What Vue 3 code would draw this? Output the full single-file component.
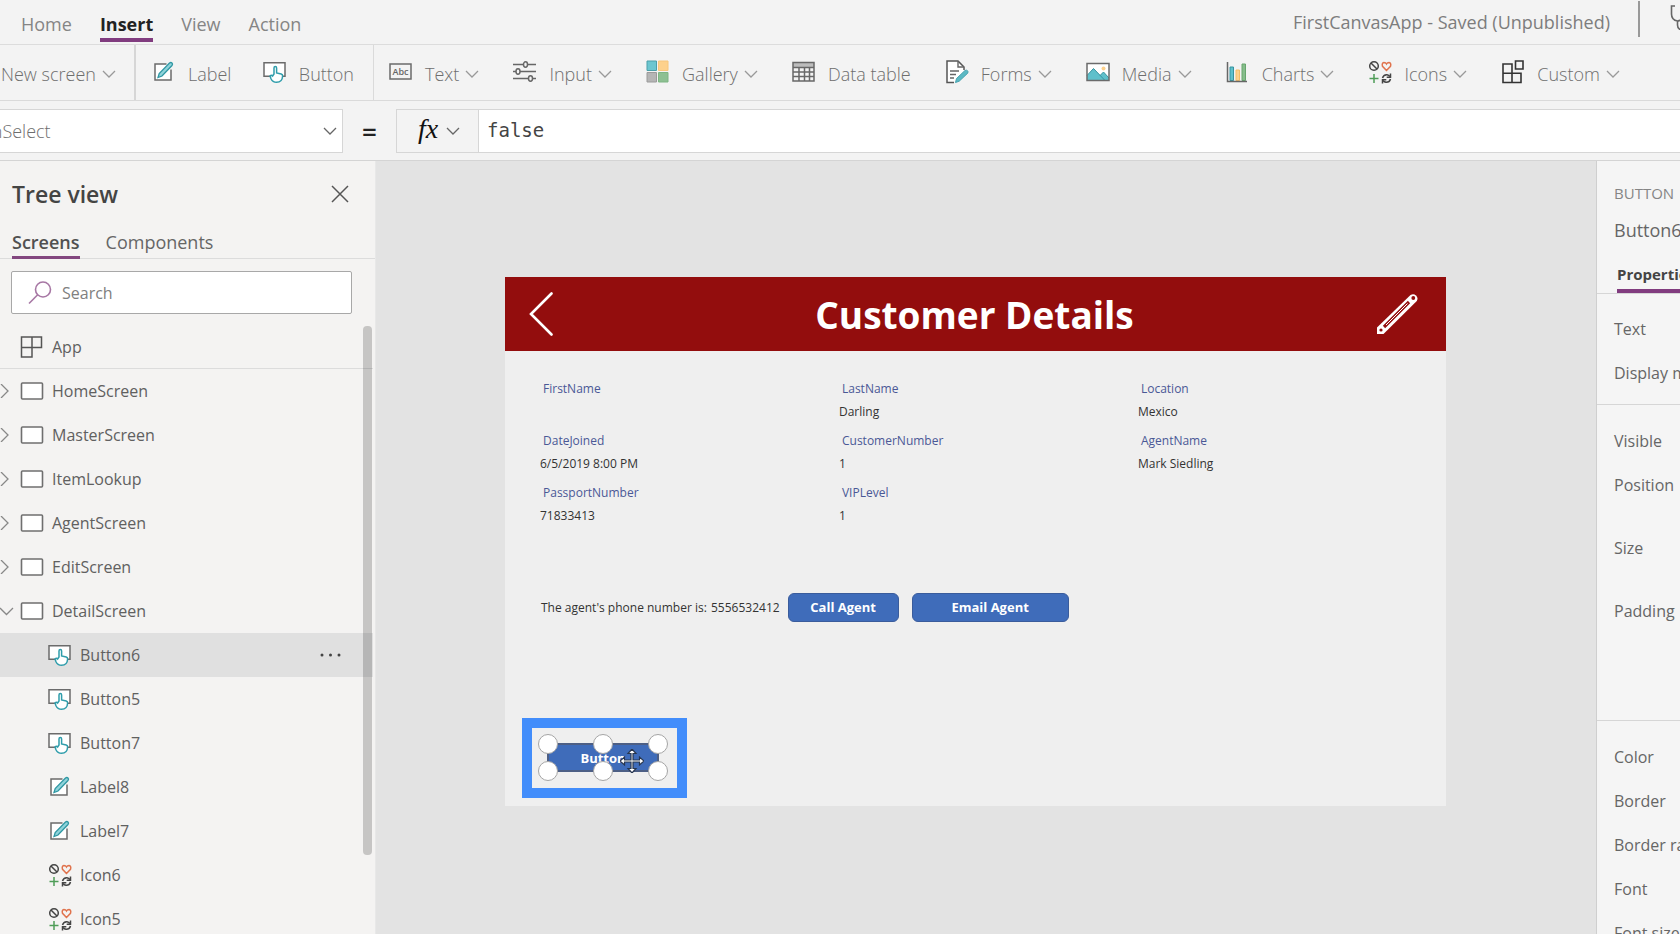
<script setup>
import { ref } from 'vue'

const pencilBox =
  '<path d="M14.500 4H3v16h16V9.500" fill="#fff" stroke="#6b6b6b" stroke-width="1.500"/><path d="M6 17.500l1.200-4L17.500 3q1.400-1 2.500 0t0 2.500L10 16z" fill="#8fd3da" stroke="#2f97a3" stroke-width="1.300"/>'
const touch =
  '<path d="M1 2.700h21v13.600H1z" fill="#fff" stroke="#6b6b6b" stroke-width="1.500"/><path d="M11 14V8q0-1.500 1.300-1.500T13.600 8v5l4.600 1q1.600.500 1.400 2.300-.400 6-6 6-4 0-5.600-3.600l-1-2.700q1.400-1.200 2.600 0z" fill="#fff" stroke="#2f9dab" stroke-width="1.500"/>'
const shapes =
  '<g fill="none" stroke-width="1.500"><circle cx="6" cy="6" r="4.300" stroke="#444"/><path d="M3 3l6 6" stroke="#444"/><path d="M18.500 10.500l-4-4.200q-1-3.200 1.500-3.800 1.700 0 2.500 1.500.8-1.500 2.500-1.500 2.500.600 1.500 3.800z" stroke="#e0734d"/><path d="M6 14v9M1.500 18.500h9" stroke="#4f9d58"/><path d="M14.500 18q1-3.500 4.500-3.300 1.800.300 3 1.800M22.500 19q-1 3.500-4.500 3.300-1.800-.300-3-1.800" stroke="#444"/><path d="M22.500 13.500v3.800h-3.800M14.500 23.500v-3.800h3.800" stroke="#444"/></g>'

const icons = {
  label: pencilBox,
  button: touch,
  icons: shapes,
  text: '<path d="M1 4h21v15H1z" fill="none" stroke="#6b6b6b" stroke-width="1.500"/><text x="11.500" y="15" text-anchor="middle" font-family="Open Sans, sans-serif" font-weight="600" font-size="9" fill="#666">Abc</text>',
  input:
    '<g fill="#f3f3f3" stroke="#666" stroke-width="1.500"><path d="M0 4.500h23M0 11.500h23M0 18.500h23"/><ellipse cx="12.500" cy="4.500" rx="2" ry="2.700"/><ellipse cx="5" cy="11.500" rx="2" ry="2.700"/><ellipse cx="17.500" cy="18.500" rx="2" ry="2.700"/></g>',
  gallery:
    '<g stroke-width="1"><path d="M1 1h9.500v9.500H1z" fill="#6cc6d0" stroke="#4b9fa9"/><path d="M12.500 1H22v9.500h-9.500z" fill="#fdd18c" stroke="#f6c67c"/><path d="M1 12.500h9.500V22H1z" fill="#b5b5b5" stroke="#9a9a9a"/><path d="M12.500 12.500H22V22h-9.500z" fill="#8dc092" stroke="#7db583"/></g>',
  table:
    '<path d="M1 2.500h21v5H1z" fill="#bdbdbd"/><path d="M1 2.500h21V21H1zM1 7.500h21M1 12h21M1 16.500h21M7 7.500V21M12.500 7.500V21M17.500 7.500V21" fill="none" stroke="#686868" stroke-width="1.500"/>',
  forms:
    '<path d="M9 22.500H2V1h11l6 6v3" fill="#fff" stroke="#555" stroke-width="1.500"/><path d="M13 1v6h6M5 11h9M5 14.500h6M5 18h4" fill="none" stroke="#666" stroke-width="1.400"/><path d="M10.500 22.500l1-4 8.500-8q1.500-.800 2.500.200t.200 2.500l-8.500 8z" fill="#5bb9c4" stroke="#4aa5b1"/>',
  media:
    '<path d="M1 3.500h22v17H1z" fill="#fff"/><circle cx="17.500" cy="8.500" r="2" fill="#fdd18c"/><path d="M1 15.500l6.500-7 11.500 12H1zM14 15.500l3.500-3.500 5.500 6v2.500h-4.500z" fill="#5fc0cb"/><path d="M1 15.500l6.500-7 11.500 12M14 15.500l3.500-3.500 5.500 6" fill="none" stroke="#3694a0"/><path d="M1 3.500h22v17H1z" fill="none" stroke="#6b6b6b" stroke-width="1.500"/>',
  charts:
    '<path d="M4 7h3.500v13.500H4z" fill="#5fc0cb" stroke="#3694a0"/><path d="M10 10h3.500v10.500H10z" fill="#fdd18c" stroke="#f3bd68"/><path d="M16 4h3.500v16.500H16z" fill="#86bd8b" stroke="#66a56d"/><path d="M1.500 2v19.500H21" fill="none" stroke="#666" stroke-width="1.500"/>',
  custom:
    '<path d="M2 4h9v18.500H2zM2 13.300h18v9.200H2zM11 13.300v9.200M14.500 1H22v8h-7.500z" fill="none" stroke="#333" stroke-width="1.600"/>',
  app: '<path d="M1.500 2h20v10.500h-20zM1.500 2h10.500v20H1.500z" fill="none" stroke="#555" stroke-width="1.500"/>',
  screen: '<rect x="1.500" y="4" width="21" height="16" rx="1" fill="#fff" stroke="#6f6f6f" stroke-width="1.600"/>'
}

const menus = ['Home', 'Insert', 'View', 'Action']
const activeMenu = ref('Insert')

const tools = [
  { name: 'Text', icon: 'text', drop: true },
  { name: 'Input', icon: 'input', drop: true },
  { name: 'Gallery', icon: 'gallery', drop: true },
  { name: 'Data table', icon: 'table', drop: false },
  { name: 'Forms', icon: 'forms', drop: true },
  { name: 'Media', icon: 'media', drop: true },
  { name: 'Charts', icon: 'charts', drop: true },
  { name: 'Icons', icon: 'icons', drop: true },
  { name: 'Custom', icon: 'custom', drop: true }
]

const screens = ['HomeScreen', 'MasterScreen', 'ItemLookup', 'AgentScreen', 'EditScreen', 'DetailScreen']
const controls = [
  { name: 'Button6', icon: 'button' },
  { name: 'Button5', icon: 'button' },
  { name: 'Button7', icon: 'button' },
  { name: 'Label8', icon: 'label' },
  { name: 'Label7', icon: 'label' },
  { name: 'Icon6', icon: 'icons' },
  { name: 'Icon5', icon: 'icons' }
]
const selected = ref('Button6')

const fields = [
  ['FirstName', ''],
  ['LastName', 'Darling'],
  ['Location', 'Mexico'],
  ['DateJoined', '6/5/2019 8:00 PM'],
  ['CustomerNumber', '1'],
  ['AgentName', 'Mark Siedling'],
  ['PassportNumber', '71833413'],
  ['VIPLevel', '1']
]

const query = ref('')
const formula = ref('false')
</script>

<template>
  <div class="studio">
    <header class="menubar">
      <nav class="menus">
        <button v-for="m in menus" :key="m" class="menu" :class="{ active: m === activeMenu }" @click="activeMenu = m">{{ m }}</button>
      </nav>
      <div class="status">
        <span>FirstCanvasApp - Saved (Unpublished)</span>
        <i class="bar"></i>
        <button class="checker" aria-label="App checker">
          <svg width="24" height="28" viewBox="0 0 24 28" fill="none" stroke="#666" stroke-width="1.600"><path d="M5 2H1.500v8q0 6 6 7 6-1 6-7V2H10M7.500 17v4q0 5 5.500 5t5.500-6" /></svg>
        </button>
      </div>
    </header>

    <div class="ribbon">
      <button class="tool first">New screen<svg class="chev" viewBox="0 0 14 8"><path d="M1 1l6 6 6-6" /></svg></button>
      <div class="group pair">
        <button class="tool"><svg class="ico" viewBox="0 0 24 24" v-html="icons.label"></svg>Label</button>
        <button class="tool"><svg class="ico" viewBox="0 0 24 24" v-html="icons.button"></svg>Button</button>
      </div>
      <div class="group rest">
        <button v-for="t in tools" :key="t.name" class="tool">
          <svg class="ico" viewBox="0 0 24 24" v-html="icons[t.icon]"></svg>{{ t.name }}<svg v-if="t.drop" class="chev" viewBox="0 0 14 8"><path d="M1 1l6 6 6-6" /></svg>
        </button>
      </div>
    </div>

    <div class="formula">
      <div class="property">
        <select aria-label="Property"><option>OnSelect</option></select>
        <svg class="chev dark" viewBox="0 0 14 8"><path d="M1 1l6 6 6-6" /></svg>
      </div>
      <span class="equals">=</span>
      <button class="fx"><em>fx</em><svg class="chev dark" viewBox="0 0 14 8"><path d="M1 1l6 6 6-6" /></svg></button>
      <input v-model="formula" class="expression" aria-label="Formula" />
    </div>

    <main class="work">
      <aside class="tree">
        <div class="tree-head">
          <h2>Tree view</h2>
          <button class="close" aria-label="Close"><svg width="18" height="18" viewBox="0 0 18 18"><path d="M1 1l16 16M17 1L1 17" stroke="#555" stroke-width="1.500" /></svg></button>
        </div>
        <div class="tabs">
          <button class="tab active">Screens</button>
          <button class="tab">Components</button>
        </div>
        <label class="search">
          <svg width="24" height="24" viewBox="0 0 24 24" fill="none" stroke="#a777a4" stroke-width="1.600"><circle cx="15" cy="8.500" r="7.500" /><path d="M9.700 13.800L1 22.500" /></svg>
          <input v-model="query" type="text" placeholder="Search" aria-label="Search" />
        </label>
        <div class="list">
          <button class="row app"><svg class="ico" viewBox="0 0 24 24" v-html="icons.app"></svg>App</button>
          <button v-for="s in screens" :key="s" class="row screen">
            <svg v-if="s === 'DetailScreen'" class="twist" viewBox="0 0 14 14"><path d="M0 4l6.500 6.500L13 4" /></svg>
            <svg v-else class="twist" viewBox="0 0 14 14"><path d="M1 0l7 7-7 7" /></svg>
            <svg class="ico" viewBox="0 0 24 24" v-html="icons.screen"></svg>{{ s }}
          </button>
          <button v-for="c in controls" :key="c.name" class="row control" :class="{ selected: c.name === selected }" @click="selected = c.name">
            <svg class="ico" viewBox="0 0 24 24" v-html="icons[c.icon]"></svg>{{ c.name }}
            <svg v-if="c.name === selected" class="dots" viewBox="0 0 22 4"><circle cx="2" cy="2" r="1.500" /><circle cx="10.500" cy="2" r="1.500" /><circle cx="19" cy="2" r="1.500" /></svg>
          </button>
          <i class="thumb"></i>
        </div>
      </aside>

      <section class="stage">
        <div class="canvas">
          <div class="banner">
            <button aria-label="Back"><svg width="24" height="44" viewBox="0 0 24 44" fill="none" stroke="#fff" stroke-width="2.600" stroke-linecap="round"><path d="M22.500 1.500L2 22l20.500 20.500" /></svg></button>
            <h1>Customer Details</h1>
            <button aria-label="Edit">
              <svg width="42" height="42" viewBox="0 0 42 42" fill="none">
                <path d="M1 41v-6.500L34.500 2q3-1.800 5.500.500t.800 5.500L7.500 41z" fill="#fff" />
                <path d="M8 34L33 9" stroke="#930d0d" stroke-width="3.200" />
                <path d="M10 32L31.500 10.500" stroke="#fff" stroke-width="1" />
                <circle cx="5" cy="37" r="1.600" fill="#930d0d" /><circle cx="37.300" cy="5" r="1.900" fill="#930d0d" />
              </svg>
            </button>
          </div>
          <dl class="fields">
            <div v-for="f in fields" :key="f[0]"><dt>{{ f[0] }}</dt><dd>{{ f[1] }}</dd></div>
          </dl>
          <div class="agent">
            <span class="phone">The agent's phone number is:</span>
            <span>5556532412</span>
            <button class="blue call">Call Agent</button>
            <button class="blue email">Email Agent</button>
          </div>
          <div class="highlight">
            <div class="picked">
              <button class="blue">Button</button>
              <i class="handle t l"></i><i class="handle t m"></i><i class="handle t r"></i>
              <i class="handle b l"></i><i class="handle b m"></i><i class="handle b r"></i>
              <svg class="cursor" viewBox="0 0 24 24"><path d="M12 0l4 4.500h-3v6.500h6.500V8l4.500 4-4.500 4v-3H13v6.500h3L12 24l-4-4.500h3V13H4.500v3L0 12l4.500-4v3H11V4.500H8z" fill="#fff" stroke="#27364f" stroke-width="1.200" /></svg>
            </div>
          </div>
        </div>
      </section>

      <aside class="props">
        <div class="kind">BUTTON</div>
        <div class="name">Button6</div>
        <button class="ptab">Properties</button>
        <div class="block"><p>Text</p><p>Display mode</p></div>
        <div class="block second"><p>Visible</p><p>Position</p><p class="tall">Size</p><p class="tall">Padding</p></div>
        <div class="block"><p>Color</p><p>Border</p><p>Border radius</p><p>Font</p><p>Font size</p></div>
      </aside>
    </main>
  </div>
</template>

<style>
body { margin: 0; overflow: hidden; }
</style>

<style scoped>
.studio { height: 100vh; display: flex; flex-direction: column; background: #f3f3f3; font-family: "Open Sans", "Noto Sans", sans-serif; color: #666; font-size: 17px; overflow: hidden; }
.studio * { box-sizing: border-box; }
button { font: inherit; color: inherit; background: none; border: 0; padding: 0; margin: 0; white-space: nowrap; text-align: left; }
svg { flex: none; display: block; }
.ico { width: 24px; height: 24px; }
.chev { width: 14px; height: 8px; fill: none; stroke: #999; stroke-width: 1.300; margin-left: 6px; }
.chev.dark { stroke: #666; }

.menubar { flex: none; height: 45px; display: flex; justify-content: space-between; border-bottom: 1px solid #dcdcdc; }
.menus { display: flex; gap: 28px; padding: 8px 0 0 21px; }
.menu { height: 34px; line-height: 32px; font-size: 18px; color: #858585; border-bottom: 4px solid transparent; }
.menu.active { font-weight: 700; color: #222; border-color: #813c7f; }
.status { display: flex; color: #7d7d7d; font-size: 18px; line-height: 44px; white-space: nowrap; }
.bar { width: 2px; height: 36px; margin: 1px 30px 0 28px; background: #999; }
.checker { width: 10px; height: 30px; padding-top: 4px; overflow: hidden; }

.ribbon { flex: none; height: 56px; display: flex; border-bottom: 1px solid #dadada; font-size: 18px; font-weight: 300; color: #6e6e6e; }
.tool { display: flex; align-items: center; padding-top: 3px; }
.tool .ico { margin: 0 12px 4px 0; }
.tool.first { width: 134px; padding-left: 1px; }
.group { display: flex; }
.pair { width: 239px; justify-content: space-between; padding: 0 19px 0 16px; border-left: 2px solid #d6d6d6; }
.rest { flex: 1; justify-content: space-between; padding: 0 60px 0 15px; border-left: 1px solid #dadada; }

.formula { flex: none; height: 60px; display: flex; align-items: center; border-bottom: 1px solid #d4d4d4; }
.property { width: 343px; height: 44px; display: flex; align-items: center; background: #fff; border: 1px solid #d6d6d6; border-left: 0; overflow: hidden; padding-right: 5px; }
.property select { flex: 1; margin-left: -22px; appearance: none; border: 0; padding: 0; background: none; font: inherit; font-size: 18px; font-weight: 300; color: #6e6e6e; }
.equals { width: 53px; text-align: center; font-size: 26px; font-weight: 600; color: #222; }
.fx { width: 82px; height: 44px; display: flex; align-items: center; padding-left: 21px; border: 1px solid #d6d6d6; border-right: 0; }
.fx em { font: italic 28px/40px "Liberation Serif", serif; color: #111; padding-bottom: 3px; }
.fx .chev { margin-left: 8px; }
.expression { flex: 1; min-width: 0; height: 44px; padding: 0 8px 2px; border: 1px solid #d6d6d6; border-right: 0; font: 19px "DejaVu Sans Mono", monospace; color: #444; background: #fff; outline: 0; }

.work { flex: 1; min-height: 0; display: flex; background: #e3e3e3; }
.tree { flex: none; width: 376px; display: flex; flex-direction: column; background: #f4f3f2; border-right: 1px solid #e8e8e8; }
.tree-head { display: flex; justify-content: space-between; align-items: center; height: 66px; padding: 0 26px 0 12px; }
h2 { margin: 0; font-size: 23px; font-weight: 600; color: #444; }
.tabs { display: flex; gap: 26px; height: 32px; padding-left: 12px; border-bottom: 1px solid #dcdcdc; }
.tab { height: 32px; line-height: 30px; font-size: 18px; border-bottom: 3px solid transparent; }
.tab.active { font-weight: 600; color: #505050; border-color: #83477f; }
.search { display: flex; align-items: center; gap: 10px; height: 43px; margin: 12px 23px 0 11px; padding: 0 16px; background: #fff; border: 1px solid #a8a8a8; border-radius: 2px; }
.search input { flex: 1; min-width: 0; border: 0; padding: 0; outline: 0; font: inherit; font-size: 16px; background: none; color: #555; }
.search input::placeholder { color: #808080; opacity: 1; }
.list { position: relative; flex: 1; min-height: 0; margin-top: 11px; overflow: hidden; }
.row { width: 373px; height: 44px; display: flex; align-items: center; font-size: 16px; color: #606060; }
.row .ico { margin-right: 8px; }
.row.app { padding-left: 20px; border-bottom: 1px solid #dcdcdc; }
.twist { width: 14px; height: 14px; margin-right: 6px; fill: none; stroke: #888; stroke-width: 1.300; }
.row.control { padding-left: 48px; }
.row.selected { background: #e0e0e0; }
.dots { width: 22px; height: 4px; margin-left: auto; margin-right: 31px; fill: #444; }
.thumb { position: absolute; top: 1px; right: 3px; width: 9px; height: 529px; border-radius: 4px; background: #00000030; }

.stage { flex: 1; min-width: 0; padding: 116px 150px 0 129px; }
.canvas { background: #efefef; padding-bottom: 8px; font-size: 12px; color: #333; }
.banner { height: 74px; display: flex; align-items: center; justify-content: space-between; padding: 0 28px 0 24px; background: #930d0d; }
h1 { margin: 0; color: #fff; font-size: 37px; line-height: 74px; font-weight: 700; padding-left: 20px; padding-top: 1px; }
.fields { margin: 0; padding: 26px 0 0 35px; display: grid; grid-template-columns: repeat(3, 33%); row-gap: 4px; }
.fields > div { height: 48px; }
dt { padding-left: 3px; line-height: 24px; color: #4a5896; }
dd { margin: 0; line-height: 22px; }
.agent { display: flex; align-items: center; margin-top: 63px; padding-left: 36px; height: 30px; }
.phone { width: 170px; white-space: nowrap; }
.blue { height: 29px; text-align: center; font-size: 13px; font-weight: 700; color: #fff; background: #3f6cba; border: 1px solid #3a5c9c; border-radius: 6px; }
.call { width: 111px; margin-left: 8px; }
.email { width: 157px; margin-left: 13px; }
.highlight { width: 165px; height: 80px; margin: 96px 0 0 17px; padding: 15px; border: 10px solid #428dfb; }
.picked { position: relative; width: 112px; height: 29px; }
.picked .blue { display: block; width: 112px; border-radius: 0; border: 2px solid #4d5f85; }
.handle { position: absolute; width: 20px; height: 20px; border-radius: 50%; background: #fff; border: 1px solid #a5a5a5; }
.t { top: -9px; }
.b { bottom: -9px; }
.l { left: -9px; }
.m { left: 46px; }
.r { right: -9px; }
.cursor { position: absolute; left: 73px; top: 6px; width: 24px; height: 24px; }

.props { flex: none; width: 84px; overflow: hidden; background: #f5f5f5; border-left: 1px solid #cfcfcf; white-space: nowrap; font-size: 16px; }
.kind { padding: 21px 0 0 17px; font-size: 15px; line-height: 22px; color: #858585; }
.name { padding: 13px 0 0 17px; font-size: 18px; line-height: 26px; }
.ptab { display: block; margin: 16px 0 0 20px; height: 34px; line-height: 24px; font-size: 15px; font-weight: 700; color: #444; border-bottom: 4px solid #813c7f; }
.block { border-top: 1px solid #d6d6d6; padding: 13px 0 9px 17px; }
.block + .block { padding-top: 14px; }
.block p { margin: 0; height: 44px; line-height: 44px; }
.block.second { padding-bottom: 87px; }
.block .tall { margin-top: 19px; }
</style>
